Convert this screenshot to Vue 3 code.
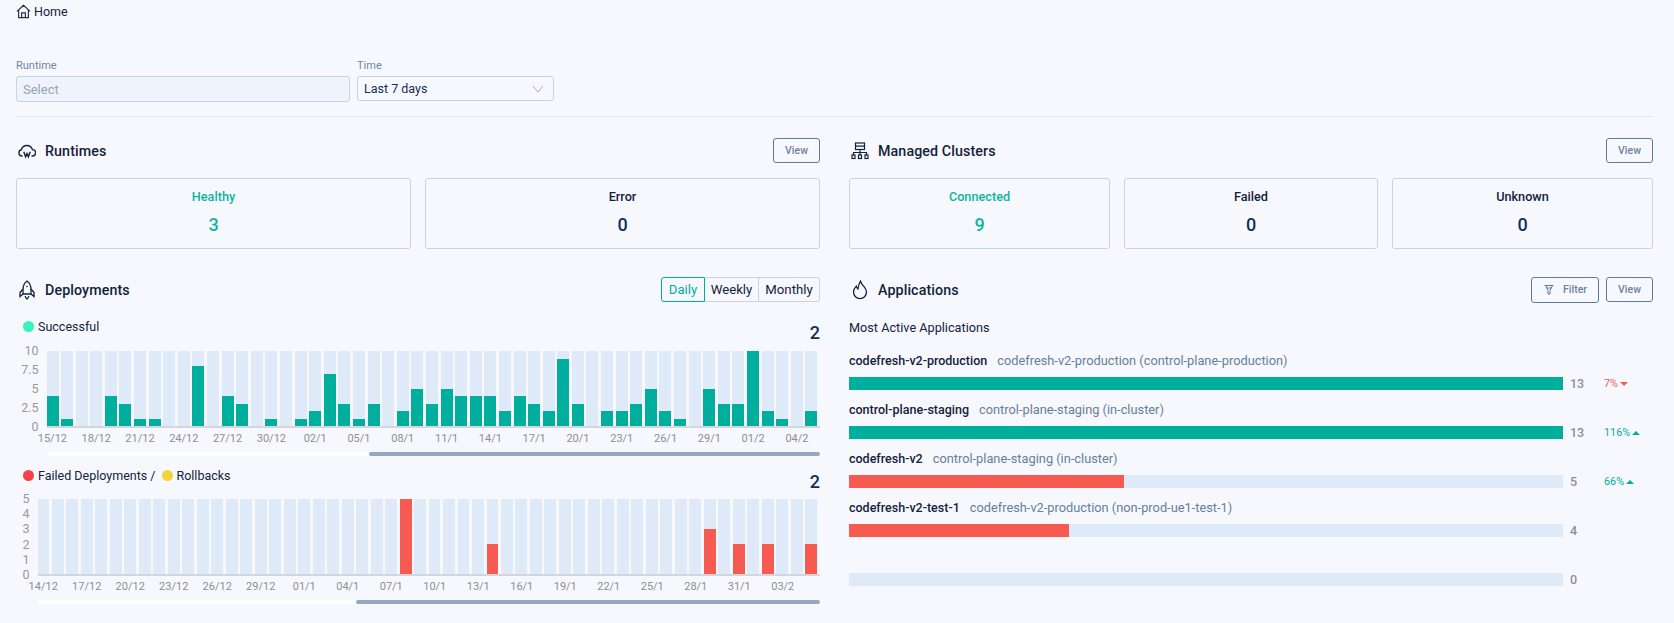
<script setup>
const ok = [4,1,0,0,4,3,1,1,0,0,8,0,4,3,0,1,0,1,2,7,3,1,3,0,2,5,3,5,4,4,4,2,4,3,2,9,3,0,2,2,3,5,2,1,0,5,3,3,10,2,1,0,2]
const okLabels = ['15/12','18/12','21/12','24/12','27/12','30/12','02/1','05/1','08/1','11/1','14/1','17/1','20/1','23/1','26/1','29/1','01/2','04/2']
const failed = Array.from({ length: 54 }, (_, i) => ({ 25: 5, 31: 2, 46: 3, 48: 2, 50: 2, 53: 2 })[i] || 0)
const failLabels = ['14/12','17/12','20/12','23/12','26/12','29/12','01/1','04/1','07/1','10/1','13/1','16/1','19/1','22/1','25/1','28/1','31/1','03/2']
const apps = [
  { name: 'codefresh-v2-production', sub: 'codefresh-v2-production (control-plane-production)', n: 13, color: 'teal', pct: '7%', dir: 'down' },
  { name: 'control-plane-staging', sub: 'control-plane-staging (in-cluster)', n: 13, color: 'teal', pct: '116%', dir: 'up' },
  { name: 'codefresh-v2', sub: 'control-plane-staging (in-cluster)', n: 5, color: 'red', pct: '66%', dir: 'up' },
  { name: 'codefresh-v2-test-1', sub: 'codefresh-v2-production (non-prod-ue1-test-1)', n: 4, color: 'red' },
  { name: '', sub: '', n: 0, color: 'red' }
]
</script>

<template>
  <div class="page">
    <div class="crumb">
      <svg class="home" viewBox="0 0 16 16" fill="none" stroke="#1c2b3f" stroke-width="1.2"><path d="M1 7.8 8 1.4l7 6.4M2.800 6.400V14.500h10.400V6.400M6 14.500V9.500h4v5"/></svg>
      <span>Home</span>
    </div>

    <div class="filters">
      <label class="field runtime">
        <span class="lab">Runtime</span>
        <span class="input disabled">Select</span>
      </label>
      <label class="field time">
        <span class="lab">Time</span>
        <span class="input">Last 7 days
          <svg class="chev" viewBox="0 0 12 8" fill="none" stroke="#9fb0c4" stroke-width="1"><path d="M1 1l5 6 5-6"/></svg>
        </span>
      </label>
    </div>
    <div class="rule"></div>

    <div class="cols">
      <section>
        <header class="head">
          <svg class="ico" viewBox="0 0 18 18" fill="none" stroke="#13233a" stroke-width="1.4"><path d="M4.500 14H4a3.200 3.200 0 0 1-.6-6.300A5.700 5.700 0 0 1 14.400 7.600a3.200 3.200 0 0 1 .1 6.400H13.500"/><path d="M5.800 9.800l1.800 5 1.400-3.200 1.400 3.200 1.800-5"/></svg>
          <h2>Runtimes</h2>
          <button class="btn">View</button>
        </header>
        <div class="cards">
          <div class="card ok"><span>Healthy</span><b>3</b></div>
          <div class="card"><span>Error</span><b>0</b></div>
        </div>
      </section>

      <section>
        <header class="head">
          <svg class="ico" viewBox="0 0 18 18" fill="none" stroke="#13233a" stroke-width="1.2"><rect x="4.500" y="1" width="9" height="6.500"/><path d="M4.500 4.200h9M9 7.500v3M2.500 13v-2.500h13V13M9 10.500V13" /><rect x="1" y="13" width="3" height="3.500"/><rect x="7.500" y="13" width="3" height="3.500"/><rect x="14" y="13" width="3" height="3.500"/></svg>
          <h2>Managed Clusters</h2>
          <button class="btn">View</button>
        </header>
        <div class="cards three">
          <div class="card ok"><span>Connected</span><b>9</b></div>
          <div class="card"><span>Failed</span><b>0</b></div>
          <div class="card"><span>Unknown</span><b>0</b></div>
        </div>
      </section>

      <section class="lower">
        <header class="head">
          <svg class="ico tall" viewBox="0 0 18 20" fill="none" stroke="#13233a" stroke-width="1.300"><path d="M9 1C11.800 3 13 6 13 9.500V14H5V9.500C5 6 6.200 3 9 1Z"/><path d="M5 9 2 12.500V16.500L5 14M13 9l3 3.500V16.500L13 14M7.200 16c.2 1.300.8 2.300 1.800 3 1-.7 1.600-1.700 1.800-3"/><circle cx="9" cy="6.500" r=".8" fill="#13233a" stroke="none"/></svg>
          <h2>Deployments</h2>
          <div class="seg">
            <span class="active">Daily</span>
            <span>Weekly</span>
            <span>Monthly</span>
          </div>
        </header>

        <div class="legend first">
          <div class="leg"><i class="dot mint"></i>Successful</div>
          <b class="total">2</b>
        </div>
        <div class="chart c1">
          <div class="yaxis"><span>10</span><span>7.5</span><span>5</span><span>2.5</span><span>0</span></div>
          <div class="plotwrap">
            <div class="plot">
              <div v-for="(v, i) in ok" :key="i" class="slot"><div class="track"><div class="fill teal" :style="{ height: v * 10 + '%' }"></div></div></div>
            </div>
            <div class="xaxis"><span v-for="l in okLabels" :key="l">{{ l }}</span></div>
            <div class="scroll"><div class="scroll-track s1"></div><div class="thumb"></div></div>
          </div>
        </div>

        <div class="legend second">
          <div class="leg"><i class="dot redd"></i>Failed Deployments /<i class="dot yellow"></i>Rollbacks</div>
          <b class="total">2</b>
        </div>
        <div class="chart c2">
          <div class="yaxis"><span>5</span><span>4</span><span>3</span><span>2</span><span>1</span><span>0</span></div>
          <div class="plotwrap">
            <div class="plot">
              <div v-for="(v, i) in failed" :key="i" class="slot"><div class="track"><div class="fill red" :style="{ height: v * 20 + '%' }"></div></div></div>
            </div>
            <div class="xaxis"><span v-for="l in failLabels" :key="l">{{ l }}</span></div>
            <div class="scroll"><div class="scroll-track s2"></div><div class="thumb"></div></div>
          </div>
        </div>
      </section>

      <section class="lower">
        <header class="head">
          <svg class="ico tall" viewBox="0 0 18 20" fill="none" stroke="#13233a" stroke-width="1.300"><path d="M9.500 1.200c.6 2.800 2.200 3.800 3.700 5.600 1.300 1.500 2.300 3.300 2.300 5.300a6.500 6.500 0 0 1-13 0c0-2.500 1.200-4.500 2.800-6 .2 1.400.7 2.300 1.700 2.900C7.200 6.300 8 3.400 9.500 1.200Z"/></svg>
          <h2>Applications</h2>
          <button class="btn filter">
            <svg viewBox="0 0 12 12" fill="none" stroke="#5f7a96" stroke-width="1"><path d="M1.500 1.500h9M2.500 1.500 5 6.500v3.500h2V6.500l2.500-5M3.800 4h4.400"/></svg>
            Filter
          </button>
          <button class="btn">View</button>
        </header>
        <div class="most">Most Active Applications</div>
        <div v-for="(a, i) in apps" :key="i" class="app">
          <div class="app-title"><b>{{ a.name }}</b><span>{{ a.sub }}</span></div>
          <div class="app-row">
            <div class="app-bar"><div class="app-fill" :class="a.color" :style="{ width: a.n / 13 * 100 + '%' }"></div></div>
            <span class="count">{{ a.n }}</span>
            <span v-if="a.pct" class="pct" :class="a.dir">{{ a.pct }}<i class="tri"></i></span>
          </div>
        </div>
      </section>
    </div>
  </div>
</template>

<style>
html, body { margin: 0; background: #f7f8fe; }
</style>

<style scoped>
.page {
  box-sizing: border-box;
  width: 1674px;
  height: 623px;
  padding: 0 21px 0 16px;
  overflow: hidden;
  background: #f7f8fe;
  color: #13233a;
  font-family: Roboto, "Liberation Sans", sans-serif;
  font-size: 12px;
}
.crumb { display: flex; align-items: center; gap: 3px; height: 23px; font-size: 12.500px; }
.home { width: 15px; height: 15px; }
.filters { display: flex; gap: 7px; margin-top: 36px; }
.field { display: flex; flex-direction: column; gap: 3px; }
.lab { height: 14px; line-height: 14px; font-size: 11px; color: #71879f; }
.runtime { width: 334px; }
.time { width: 197px; }
.input {
  box-sizing: border-box; display: flex; align-items: center; justify-content: space-between;
  height: 25px; padding: 0 9px 0 6px; border: 1px solid #c6d4e6; border-radius: 3px; font-size: 12.500px; color: #13304f;
}
.input.disabled { height: 26px; background: #eff4fc; color: #93a5ba; font-size: 13px; }
.chev { width: 12px; height: 8px; }
.rule { height: 1px; margin-top: 14px; background: #e1e9f3; }
.cols { display: grid; grid-template-columns: 804px 804px; column-gap: 29px; margin-top: 21px; }
.head { display: flex; align-items: center; height: 25px; }
.head h2 { margin: 0; font-size: 14.250px; font-weight: 500; color: #13233a; letter-spacing: 0.1px; flex: 1; }
.ico { width: 18px; height: 18px; margin: 0 9px 0 2px; flex: none; }
.ico.tall { height: 20px; }
.btn {
  box-sizing: border-box; height: 25px; width: 47px; padding: 0; background: transparent;
  border: 1px solid #5f7a96; border-radius: 3px; color: #6b839c; font: 500 10.500px Roboto, sans-serif;
}
.filter { width: 68px; height: 26px; margin-right: 7px; display: flex; align-items: center; justify-content: center; gap: 8px; }
.filter svg { width: 12px; height: 12px; }
.cards { display: grid; grid-template-columns: 395px 395px; column-gap: 14px; margin-top: 15px; }
.cards.three { grid-template-columns: 261px 254px 261px; column-gap: 14px; }
.card {
  box-sizing: border-box; height: 71px; display: flex; flex-direction: column; align-items: center;
  border: 1px solid #c6d4e6; border-radius: 3px; padding-top: 10px; color: #13233a; font-size: 12.700px; font-weight: 500;
}
.card b { margin-top: 10px; font-size: 18px; line-height: 22px; font-weight: 500; color: #123055; }
.card.ok span, .card.ok b { color: #0bb5a0; }
.lower { margin-top: 28px; }
.seg { display: flex; height: 25px; box-sizing: border-box; font-size: 13.200px; color: #13233a; }
.seg span {
  box-sizing: border-box; display: flex; align-items: center; justify-content: center;
  border: 1px solid #c6d4e6; border-left: 0; height: 25px;
}
.seg span:nth-child(1) { width: 44px; border: 1px solid #00ae9d; border-radius: 3px 0 0 3px; color: #00ae9d; }
.seg span:nth-child(2) { width: 54px; }
.seg span:nth-child(3) { width: 61px; border-radius: 0 3px 3px 0; }
.legend { display: flex; justify-content: space-between; align-items: flex-start; height: 20px; padding-left: 7px; }
.legend.first { margin-top: 15px; }
.legend.second { margin-top: 10px; }
.leg { display: flex; align-items: center; gap: 4px; height: 18px; font-size: 12.500px; color: #13233a; }
.dot { width: 11px; height: 11px; border-radius: 50%; display: inline-block; }
.mint { background: #33f5bd; }
.redd { background: #f5424a; }
.yellow { background: #f2d437; margin-left: 2px; }
.total { margin-top: 6px; font-size: 18px; line-height: 20px; font-weight: 500; color: #123055; }
.chart { display: flex; margin-top: 14px; }
.yaxis {
  box-sizing: border-box; display: flex; flex-direction: column; justify-content: space-between; align-items: flex-end;
  padding-right: 8px; margin-top: -6px; height: 88px; font-size: 12.500px; line-height: 12px; color: #999;
}
.c1 .yaxis { width: 30.500px; }
.c2 .yaxis { width: 21.500px; }
.plotwrap { flex: 1; min-width: 0; }
.plot { display: flex; height: 75px; border-bottom: 2px solid #d4d6db; }
.slot { flex: 1; padding-right: 2.600px; }
.track { height: 100%; background: #deeaf7; display: flex; align-items: flex-end; }
.fill { width: 100%; }
.teal { background: #00ae9d; }
.red { background: #f65a50; }
.xaxis { display: flex; margin-left: -16px; height: 14px; margin-top: 4px; line-height: 14px; font-size: 11px; color: #8f8f8f; }
.xaxis span { flex: 0 0 43.800px; text-align: center; white-space: nowrap; }
.c2 .xaxis span { flex-basis: 43.500px; }
.c2 { margin-top: 13px; }
.scroll { display: flex; height: 4px; margin-top: 6px; }
.scroll-track { background: #fff; border-radius: 2px 0 0 2px; }
.s1 { flex: 0 0 322px; }
.s2 { flex: 0 0 318px; }
.thumb { flex: 1; background: #95a8c0; border-radius: 2px; }
.most { margin-top: 16px; height: 20px; line-height: 20px; font-size: 12.700px; color: #13233a; }
.app { height: 49px; }
.app:nth-of-type(2) { margin-top: 13px; }
.app-title { height: 20px; line-height: 20px; display: flex; gap: 10px; font-size: 12.500px; }
.app-title b { font-weight: 500; color: #13233a; }
.app-title span { color: #668099; font-size: 12.800px; }
.app-row { display: flex; align-items: center; height: 13px; margin-top: 6px; }
.app-bar { width: 714px; height: 13px; background: #deeaf7; flex: none; }
.app-fill { height: 100%; }
.count { margin-left: 7px; width: 34px; font-size: 12.500px; font-weight: 500; color: #8f8f8f; }
.pct { display: inline-flex; align-items: center; gap: 2px; font-size: 10.800px; }
.pct.up { color: #00ae9d; }
.pct.down { color: #f65a50; }
.tri { width: 0; height: 0; border-left: 4px solid transparent; border-right: 4px solid transparent; }
.up .tri { border-bottom: 4px solid #00ae9d; }
.down .tri { border-top: 4px solid #f65a50; }
</style>
